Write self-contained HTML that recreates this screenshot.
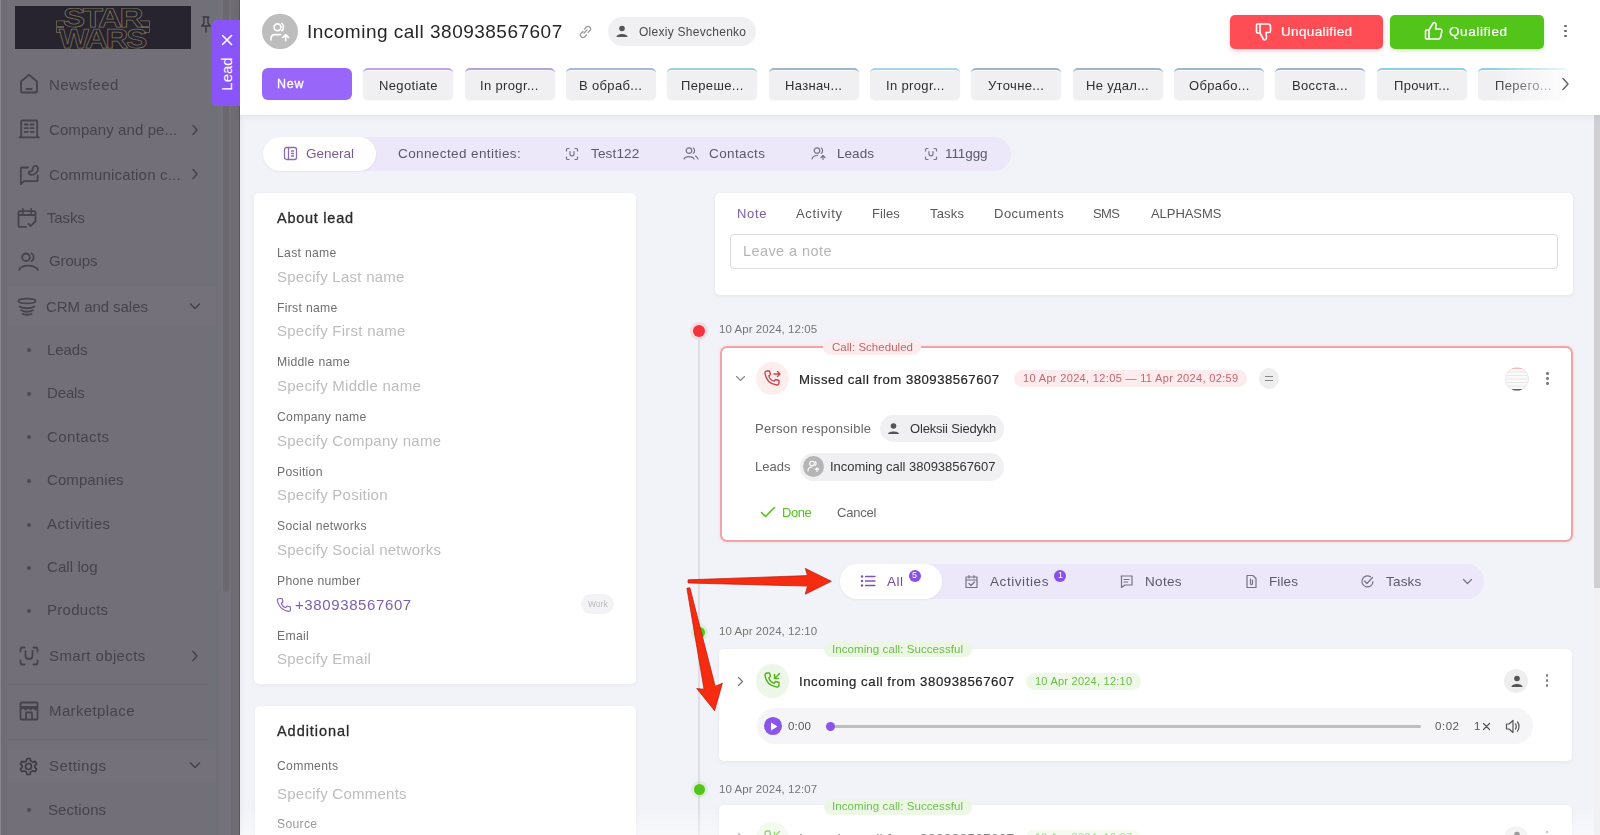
<!DOCTYPE html>
<html><head><meta charset="utf-8"><style>
html,body{margin:0;padding:0;}
body{width:1600px;height:835px;overflow:hidden;position:relative;background:#f3f3f9;font-family:'Liberation Sans', sans-serif;}
.t{position:absolute;white-space:nowrap;line-height:1;-webkit-font-smoothing:antialiased;}
.t{will-change:transform;}
</style></head><body>
<div style="position:absolute;left:0px;top:0px;width:240px;height:835px;background:#736f79;"></div>
<div style="position:absolute;left:0px;top:0px;width:7px;height:835px;background:#716d77;"></div>
<div style="position:absolute;left:0px;top:0px;width:1.2px;height:835px;background:#8a8690;"></div>
<div style="position:absolute;left:208px;top:0px;width:11px;height:835px;background:#707079;"></div>
<div style="position:absolute;left:219px;top:0px;width:12px;height:835px;background:#75717a;"></div>
<div style="position:absolute;left:223px;top:0px;width:6px;height:592px;background:#6b6870;border-radius:0 0 3px 3px;"></div>
<div style="position:absolute;left:231px;top:0px;width:7.5px;height:835px;background:#6e6b73;"></div>
<div style="position:absolute;left:238.5px;top:0px;width:1.5px;height:835px;background:#5a5760;"></div>
<div style="position:absolute;left:15px;top:6px;width:176px;height:43px;background:#27232f;"></div>
<svg style="position:absolute;left:56px;top:8px" width="95" height="41" viewBox="0 0 95 41"><g fill="none" stroke="#7a7258" stroke-width="0.75" stroke-linejoin="miter"><text x="7" y="18.6" textLength="78" lengthAdjust="spacingAndGlyphs" font-family="Liberation Sans" font-weight="700" font-size="27" letter-spacing="-2">STAR</text><text x="3" y="40" textLength="86" lengthAdjust="spacingAndGlyphs" font-family="Liberation Sans" font-weight="700" font-size="28.5" letter-spacing="-2">WARS</text><path d="M0.5 12.8 H9 M0.5 18.6 H8 M0.5 12.8 V18.6 M84 12.8 H93.5 V18.6 H85 M0.5 19.5 H8 M0.5 19.5 V24.5 H5 M86 19.5 H93.5 V24.5 H88"/></g></svg>
<svg style="position:absolute;left:200px;top:16px;" width="12" height="17" viewBox="0 0 12 17" fill="none"><path d="M3 1h6M4 1v6l-2 3h8l-2-3V1M6 10v6" stroke="#3b3842" stroke-width="1.4" stroke-linecap="round"/></svg>
<svg style="position:absolute;left:19px;top:73px;" width="20" height="21" viewBox="0 0 20 21" fill="none"><path d="M2 8.5 L10 1.8 L18 8.5 V18.2 C18 19,17.5 19.5,16.7 19.5 H3.3 C2.5 19.5,2 19,2 18.2 Z M7.5 16 H12.5" stroke="#46434d" stroke-width="1.8" stroke-linecap="round" stroke-linejoin="round" fill="none"/></svg>
<div class="t" style="left:49.4px;top:76.5px;font-size:15px;font-weight:400;color:#46434d;letter-spacing:0.36px;">Newsfeed</div>
<svg style="position:absolute;left:18px;top:119px;" width="22" height="20" viewBox="0 0 22 20" fill="none"><path d="M3.2 18.3 V2.5 C3.2 1.9,3.6 1.5,4.2 1.5 H18.2 C18.8 1.5,19.2 1.9,19.2 2.5 V18.3 M1.2 18.3 H21 M6.8 5.5 H9.8 M12.6 5.5 H15.6 M6.8 9.2 H9.8 M12.6 9.2 H15.6 M6.8 12.9 H9.8 M12.6 12.9 H15.6" stroke="#46434d" stroke-width="1.8" stroke-linecap="round" stroke-linejoin="round" fill="none"/></svg>
<div class="t" style="left:49.4px;top:121.8px;font-size:15px;font-weight:400;color:#46434d;letter-spacing:0.09px;">Company and pe...</div>
<svg style="position:absolute;left:191px;top:124px;" width="8" height="12" viewBox="0 0 8 12" fill="none"><path d="M2 1.5 L6 6 L2 10.5" stroke="#46434d" stroke-width="1.6" stroke-linecap="round" stroke-linejoin="round" fill="none"/></svg>
<svg style="position:absolute;left:19px;top:163px;" width="21" height="23" viewBox="0 0 21 23" fill="none"><path d="M9 4.5 H2.5 C2 4.5,1.8 4.8,1.8 5.2 V21.2 L5 18.2 H17.8 C18.3 18.2,18.6 17.9,18.6 17.4 V12.5 M10.2 11 C9.2 9.6,10.2 8,11.8 8.6 L13.8 7 C13 5.4,14.2 3.5,15.8 3 C18 2.4,19.6 4.5,18.8 7.2 C17.6 10.8,13.2 13.2,10.2 11 Z" stroke="#46434d" stroke-width="1.8" stroke-linecap="round" stroke-linejoin="round" fill="none"/></svg>
<div class="t" style="left:49.4px;top:166.7px;font-size:15px;font-weight:400;color:#46434d;letter-spacing:0.19px;">Communication c...</div>
<svg style="position:absolute;left:191px;top:168px;" width="8" height="12" viewBox="0 0 8 12" fill="none"><path d="M2 1.5 L6 6 L2 10.5" stroke="#46434d" stroke-width="1.6" stroke-linecap="round" stroke-linejoin="round" fill="none"/></svg>
<svg style="position:absolute;left:17px;top:208px;" width="20" height="21" viewBox="0 0 20 21" fill="none"><path d="M18.5 13 V4.5 C18.5 3.7,18 3.2,17.2 3.2 H2.8 C2 3.2,1.5 3.7,1.5 4.5 V17.5 C1.5 18.3,2 18.8,2.8 18.8 H9 M1.5 7 H18.5 M5.8 1 V5 M14.2 1 V5 M11.5 16 L13.5 18 L18.5 13.5" stroke="#46434d" stroke-width="1.8" stroke-linecap="round" stroke-linejoin="round" fill="none"/></svg>
<div class="t" style="left:46.6px;top:210.2px;font-size:15px;font-weight:400;color:#46434d;letter-spacing:-0.14px;">Tasks</div>
<svg style="position:absolute;left:18px;top:252px;" width="22" height="19" viewBox="0 0 22 19" fill="none"><path d="M8 1.5 A3.8 3.8 0 1 1 8 9.1 A3.8 3.8 0 1 1 8 1.5 Z M1.2 17.8 C3.5 12.2,16.5 12.2,19.8 17.8 M13.5 1.5 C16.3 2.5,16.3 8,13.5 9" stroke="#46434d" stroke-width="1.8" stroke-linecap="round" stroke-linejoin="round" fill="none"/></svg>
<div class="t" style="left:49.4px;top:252.9px;font-size:15px;font-weight:400;color:#46434d;letter-spacing:-0.14px;">Groups</div>
<div style="position:absolute;left:8px;top:287px;width:208px;height:38px;background:#75717b;"></div>
<svg style="position:absolute;left:17px;top:297px;" width="20" height="19" viewBox="0 0 20 19" fill="none"><path d="M1.5 4 C1.5 0.8,18.5 0.8,18.5 4 C18.5 7.2,1.5 7.2,1.5 4 Z M2.5 9.5 C6.5 11.8,13.5 11.8,17.5 9.5 M4 13.3 C7.5 15,12.5 15,16 13.3 M5.5 17 C8.5 18,11.5 18,14.5 17" stroke="#46434d" stroke-width="1.8" stroke-linecap="round" stroke-linejoin="round" fill="none"/></svg>
<div class="t" style="left:45.8px;top:298.6px;font-size:15px;font-weight:400;color:#46434d;letter-spacing:-0.05px;">CRM and sales</div>
<svg style="position:absolute;left:189px;top:302px;" width="12" height="8" viewBox="0 0 12 8" fill="none"><path d="M1.5 2 L6 6.5 L10.5 2" stroke="#46434d" stroke-width="1.6" stroke-linecap="round" stroke-linejoin="round" fill="none"/></svg>
<div style="position:absolute;left:27px;top:348.4px;width:4px;height:4.0px;background:#4d4a54;border-radius:50%;"></div>
<div class="t" style="left:47.4px;top:341.6px;font-size:15px;font-weight:400;color:#46434d;letter-spacing:-0.07px;">Leads</div>
<div style="position:absolute;left:27px;top:392.2px;width:4px;height:4.0px;background:#4d4a54;border-radius:50%;"></div>
<div class="t" style="left:47.4px;top:385.4px;font-size:15px;font-weight:400;color:#46434d;letter-spacing:-0.14px;">Deals</div>
<div style="position:absolute;left:27px;top:435.3px;width:4px;height:4.0px;background:#4d4a54;border-radius:50%;"></div>
<div class="t" style="left:47.4px;top:428.6px;font-size:15px;font-weight:400;color:#46434d;letter-spacing:0.41px;">Contacts</div>
<div style="position:absolute;left:27px;top:478.8px;width:4px;height:4.0px;background:#4d4a54;border-radius:50%;"></div>
<div class="t" style="left:47.4px;top:472.1px;font-size:15px;font-weight:400;color:#46434d;letter-spacing:0.09px;">Companies</div>
<div style="position:absolute;left:27px;top:522.5px;width:4px;height:4.0px;background:#4d4a54;border-radius:50%;"></div>
<div class="t" style="left:47.4px;top:515.8px;font-size:15px;font-weight:400;color:#46434d;letter-spacing:0.42px;">Activities</div>
<div style="position:absolute;left:27px;top:565.7px;width:4px;height:4.0px;background:#4d4a54;border-radius:50%;"></div>
<div class="t" style="left:47.4px;top:559.0px;font-size:15px;font-weight:400;color:#46434d;letter-spacing:0.08px;">Call log</div>
<div style="position:absolute;left:27px;top:608.8px;width:4px;height:4.0px;background:#4d4a54;border-radius:50%;"></div>
<div class="t" style="left:47.4px;top:602.0px;font-size:15px;font-weight:400;color:#46434d;letter-spacing:0.27px;">Products</div>
<svg style="position:absolute;left:19px;top:646px;" width="20" height="20" viewBox="0 0 20 20" fill="none"><path d="M5.5 1.5 H3.2 C2.2 1.5,1.5 2.2,1.5 3.2 V5.5 M14.5 1.5 H16.8 C17.8 1.5,18.5 2.2,18.5 3.2 V5.5 M1.5 14.5 V16.8 C1.5 17.8,2.2 18.5,3.2 18.5 H5.5 M18.5 14.5 V16.8 C18.5 17.8,17.8 18.5,16.8 18.5 H14.5 M6.5 5 V10 C6.5 14,13.5 14,13.5 10 V5" stroke="#46434d" stroke-width="1.8" stroke-linecap="round" stroke-linejoin="round" fill="none"/></svg>
<div class="t" style="left:49.0px;top:648.0px;font-size:15px;font-weight:400;color:#46434d;letter-spacing:0.38px;">Smart objects</div>
<svg style="position:absolute;left:191px;top:650px;" width="8" height="12" viewBox="0 0 8 12" fill="none"><path d="M2 1.5 L6 6 L2 10.5" stroke="#46434d" stroke-width="1.6" stroke-linecap="round" stroke-linejoin="round" fill="none"/></svg>
<div style="position:absolute;left:7px;top:684px;width:202px;height:1px;background:#6e6a74;"></div>
<svg style="position:absolute;left:19px;top:701px;" width="20" height="20" viewBox="0 0 20 20" fill="none"><path d="M2.5 1.5 H17.5 C18.1 1.5,18.5 1.9,18.5 2.5 V17.5 C18.5 18.1,18.1 18.5,17.5 18.5 H2.5 C1.9 18.5,1.5 18.1,1.5 17.5 V2.5 C1.5 1.9,1.9 1.5,2.5 1.5 Z M1.5 6 H18.5 M1.5 8.5 L4 6 L6.5 8.5 L9 6 L11.5 8.5 L14 6 L16.5 8.5 L18.5 6.5 M7 18.5 V11.5 H13 V18.5" stroke="#46434d" stroke-width="1.8" stroke-linecap="round" stroke-linejoin="round" fill="none"/></svg>
<div class="t" style="left:49.0px;top:703.1px;font-size:15px;font-weight:400;color:#46434d;letter-spacing:0.38px;">Marketplace</div>
<div style="position:absolute;left:7px;top:739px;width:202px;height:1px;background:#6e6a74;"></div>
<div style="position:absolute;left:8px;top:750px;width:208px;height:33px;background:#75717b;"></div>
<svg style="position:absolute;left:19px;top:757px;" width="19" height="19" viewBox="0 0 19 19" fill="none"><circle cx="9.5" cy="9.5" r="3" stroke="#3b3842" stroke-width="1.6"/><path d="M8 1.5 H11 L11.6 4 L13.8 5.2 L16.2 4.3 L17.7 6.9 L15.8 8.6 V10.4 L17.7 12.1 L16.2 14.7 L13.8 13.8 L11.6 15 L11 17.5 H8 L7.4 15 L5.2 13.8 L2.8 14.7 L1.3 12.1 L3.2 10.4 V8.6 L1.3 6.9 L2.8 4.3 L5.2 5.2 L7.4 4 Z" stroke="#3b3842" stroke-width="1.5" stroke-linejoin="round"/></svg>
<div class="t" style="left:49.0px;top:758.2px;font-size:15px;font-weight:400;color:#46434d;letter-spacing:0.40px;">Settings</div>
<svg style="position:absolute;left:189px;top:761px;" width="12" height="8" viewBox="0 0 12 8" fill="none"><path d="M1.5 2 L6 6.5 L10.5 2" stroke="#46434d" stroke-width="1.6" stroke-linecap="round" stroke-linejoin="round" fill="none"/></svg>
<div style="position:absolute;left:27px;top:808px;width:4px;height:4px;background:#4d4a54;border-radius:50%;"></div>
<div class="t" style="left:47.9px;top:801.8px;font-size:15px;font-weight:400;color:#46434d;letter-spacing:0.08px;">Sections</div>
<div style="position:absolute;left:240px;top:0px;width:1360px;height:835px;background:#f2f3f8;"></div>
<div style="position:absolute;left:240px;top:0px;width:5px;height:835px;background:linear-gradient(90deg,rgba(0,0,0,0.035),rgba(0,0,0,0));"></div>
<div style="position:absolute;left:1594px;top:115px;width:6px;height:720px;background:#f1f1f4;"></div>
<div style="position:absolute;left:1594px;top:115px;width:6px;height:473px;background:#d0d0d4;"></div>
<div style="position:absolute;left:240px;top:0px;width:1360px;height:115px;background:#fff;box-shadow:0 2px 6px rgba(0,0,0,0.06);"></div>
<div style="position:absolute;left:262.3px;top:13.9px;width:35.39999999999998px;height:35.4px;background:#bdbdbd;border-radius:50%;"></div>
<svg style="position:absolute;left:262px;top:14px;" width="36" height="36" viewBox="0 0 36 36" fill="none"><circle cx="15.5" cy="13.3" r="3.4" stroke="#fff" stroke-width="1.7"/><path d="M19.8 9.6 C22 10.8,22 15.6,19.8 16.8" stroke="#fff" stroke-width="1.7" stroke-linecap="round"/><path d="M9 25.8 V24.5 C9 22,10.5 20.6,13 20.6 H18.5" stroke="#fff" stroke-width="1.7" stroke-linecap="round"/><path d="M23.7 26.5 V21 M21 23.4 L23.7 20.6 L26.4 23.4" stroke="#fff" stroke-width="1.8" stroke-linecap="round" stroke-linejoin="round"/></svg>
<div class="t" style="left:306.5px;top:21.6px;font-size:19px;font-weight:400;color:#262626;letter-spacing:0.49px;">Incoming call 380938567607</div>
<svg style="position:absolute;left:578px;top:24px;" width="15" height="15" viewBox="0 0 15 15" fill="none"><path d="M6 9 L9 6 M5 7.5 L3.2 9.3 A2.4 2.4 0 0 0 6.7 12.8 L8.5 11 M10 8.5 L11.8 6.7 A2.4 2.4 0 0 0 8.3 3.2 L6.5 5" stroke="#9a9a9a" stroke-width="1.3" stroke-linecap="round"/></svg>
<div style="position:absolute;left:608px;top:17px;width:148px;height:29px;background:#f0f0f2;border-radius:15px;"></div>
<svg style="position:absolute;left:615px;top:24px;" width="14" height="14" viewBox="0 0 14 14" fill="none"><circle cx="7" cy="4.5" r="2.8" fill="#555"/><path d="M1.5 13 C1.5 9,12.5 9,12.5 13 Z" fill="#555"/></svg>
<div class="t" style="left:639.0px;top:25.6px;font-size:12px;font-weight:400;color:#4a4a4a;letter-spacing:0.27px;">Olexiy Shevchenko</div>
<div style="position:absolute;left:1229.5px;top:15px;width:153.5px;height:33.5px;background:#ff4d55;border-radius:5px;box-shadow:0 2px 4px rgba(255,77,85,0.25);"></div>
<svg style="position:absolute;left:1255px;top:22px;" width="19" height="20" viewBox="0 0 19 20" fill="none"><path d="M4 2 H13 C14.5 2,15.5 3,15.5 4.5 V9 C15.5 10,15 10.5,14 10.5 H11 L11.5 15 C11.7 17,10 18.5,8.5 17.5 L5 11 V2 Z M5 2 H2.5 C2 2,1.5 2.5,1.5 3 V10 C1.5 10.5,2 11,2.5 11 H5" stroke="#fff" stroke-width="1.6" stroke-linejoin="round" fill="none"/></svg>
<div class="t" style="left:1281.0px;top:24.7px;font-size:13.5px;font-weight:400;color:#fff;letter-spacing:0.35px;-webkit-text-stroke:0.2px #fff;">Unqualified</div>
<div style="position:absolute;left:1390.3px;top:15px;width:153.70000000000005px;height:33.5px;background:#52c41a;border-radius:5px;box-shadow:0 2px 4px rgba(82,196,26,0.25);"></div>
<svg style="position:absolute;left:1424px;top:21px;" width="19" height="20" viewBox="0 0 19 20" fill="none"><path d="M5 18 H14 C15.5 18,16.5 17,16.8 15.5 L17.8 10 C18 8.8,17 8,16 8 H11.5 L12 4 C12.2 2.2,10.5 1,9.2 2 L5 9 V18 Z M5 18 H2.5 C2 18,1.5 17.5,1.5 17 V10 C1.5 9.5,2 9,2.5 9 H5" stroke="#fff" stroke-width="1.6" stroke-linejoin="round" fill="none"/></svg>
<div class="t" style="left:1449.0px;top:24.7px;font-size:13.5px;font-weight:400;color:#fff;letter-spacing:0.59px;-webkit-text-stroke:0.2px #fff;">Qualified</div>
<div style="position:absolute;left:1564.4px;top:24.8px;width:2.599999999999909px;height:2.599999999999998px;background:#666;border-radius:50%;"></div>
<div style="position:absolute;left:1564.4px;top:29.8px;width:2.599999999999909px;height:2.599999999999998px;background:#666;border-radius:50%;"></div>
<div style="position:absolute;left:1564.4px;top:34.8px;width:2.599999999999909px;height:2.6000000000000014px;background:#666;border-radius:50%;"></div>
<div style="position:absolute;left:262px;top:68px;width:90px;height:32px;background:#9966fa;border-radius:6px;"></div>
<div class="t" style="left:276.8px;top:78.0px;font-size:12.5px;font-weight:400;color:#fff;letter-spacing:0.79px;-webkit-text-stroke:0.3px #fff;">New</div>
<div style="position:absolute;left:363.2px;top:68px;width:90.0px;height:32px;background:#f0f0f3;border-radius:5px;border-top:2px solid #c0a3e4;box-sizing:border-box;box-shadow:0 1px 2px rgba(0,0,0,0.04), inset 0 1px 0 rgba(255,255,255,0.6);"></div>
<div class="t" style="left:378.8px;top:79.0px;font-size:13px;font-weight:400;color:#2f2f2f;letter-spacing:0.00px;letter-spacing:0.35px;">Negotiate</div>
<div style="position:absolute;left:464.54999999999995px;top:68px;width:90.0px;height:32px;background:#f0f0f3;border-radius:5px;border-top:2px solid #b6a3dc;box-sizing:border-box;box-shadow:0 1px 2px rgba(0,0,0,0.04), inset 0 1px 0 rgba(255,255,255,0.6);"></div>
<div class="t" style="left:480.2px;top:79.0px;font-size:13px;font-weight:400;color:#2f2f2f;letter-spacing:0.00px;letter-spacing:0.35px;">In progr...</div>
<div style="position:absolute;left:565.9px;top:68px;width:90.0px;height:32px;background:#f0f0f3;border-radius:5px;border-top:2px solid #a7b9d6;box-sizing:border-box;box-shadow:0 1px 2px rgba(0,0,0,0.04), inset 0 1px 0 rgba(255,255,255,0.6);"></div>
<div class="t" style="left:579.3px;top:79.0px;font-size:13px;font-weight:400;color:#2f2f2f;letter-spacing:0.00px;letter-spacing:0.35px;">В обраб...</div>
<div style="position:absolute;left:667.25px;top:68px;width:90.0px;height:32px;background:#f0f0f3;border-radius:5px;border-top:2px solid #a6cdd8;box-sizing:border-box;box-shadow:0 1px 2px rgba(0,0,0,0.04), inset 0 1px 0 rgba(255,255,255,0.6);"></div>
<div class="t" style="left:680.9px;top:79.0px;font-size:13px;font-weight:400;color:#2f2f2f;letter-spacing:0.00px;letter-spacing:0.35px;">Переше...</div>
<div style="position:absolute;left:768.5999999999999px;top:68px;width:90.0px;height:32px;background:#f0f0f3;border-radius:5px;border-top:2px solid #a0b6ca;box-sizing:border-box;box-shadow:0 1px 2px rgba(0,0,0,0.04), inset 0 1px 0 rgba(255,255,255,0.6);"></div>
<div class="t" style="left:784.9px;top:79.0px;font-size:13px;font-weight:400;color:#2f2f2f;letter-spacing:0.00px;letter-spacing:0.35px;">Назнач...</div>
<div style="position:absolute;left:869.95px;top:68px;width:90.0px;height:32px;background:#f0f0f3;border-radius:5px;border-top:2px solid #a7d4e6;box-sizing:border-box;box-shadow:0 1px 2px rgba(0,0,0,0.04), inset 0 1px 0 rgba(255,255,255,0.6);"></div>
<div class="t" style="left:885.6px;top:79.0px;font-size:13px;font-weight:400;color:#2f2f2f;letter-spacing:0.00px;letter-spacing:0.35px;">In progr...</div>
<div style="position:absolute;left:971.3px;top:68px;width:90.0px;height:32px;background:#f0f0f3;border-radius:5px;border-top:2px solid #a0b5c8;box-sizing:border-box;box-shadow:0 1px 2px rgba(0,0,0,0.04), inset 0 1px 0 rgba(255,255,255,0.6);"></div>
<div class="t" style="left:988.2px;top:79.0px;font-size:13px;font-weight:400;color:#2f2f2f;letter-spacing:0.00px;letter-spacing:0.35px;">Уточне...</div>
<div style="position:absolute;left:1072.6499999999999px;top:68px;width:90.0px;height:32px;background:#f0f0f3;border-radius:5px;border-top:2px solid #a0b5c8;box-sizing:border-box;box-shadow:0 1px 2px rgba(0,0,0,0.04), inset 0 1px 0 rgba(255,255,255,0.6);"></div>
<div class="t" style="left:1086.1px;top:79.0px;font-size:13px;font-weight:400;color:#2f2f2f;letter-spacing:0.00px;letter-spacing:0.35px;">Не удал...</div>
<div style="position:absolute;left:1174.0px;top:68px;width:90.0px;height:32px;background:#f0f0f3;border-radius:5px;border-top:2px solid #a0b6ca;box-sizing:border-box;box-shadow:0 1px 2px rgba(0,0,0,0.04), inset 0 1px 0 rgba(255,255,255,0.6);"></div>
<div class="t" style="left:1188.7px;top:79.0px;font-size:13px;font-weight:400;color:#2f2f2f;letter-spacing:0.00px;letter-spacing:0.35px;">Обрабо...</div>
<div style="position:absolute;left:1275.35px;top:68px;width:90.0px;height:32px;background:#f0f0f3;border-radius:5px;border-top:2px solid #9fb4c9;box-sizing:border-box;box-shadow:0 1px 2px rgba(0,0,0,0.04), inset 0 1px 0 rgba(255,255,255,0.6);"></div>
<div class="t" style="left:1292.4px;top:79.0px;font-size:13px;font-weight:400;color:#2f2f2f;letter-spacing:0.00px;letter-spacing:0.35px;">Восста...</div>
<div style="position:absolute;left:1376.7px;top:68px;width:90.0px;height:32px;background:#f0f0f3;border-radius:5px;border-top:2px solid #90d0e2;box-sizing:border-box;box-shadow:0 1px 2px rgba(0,0,0,0.04), inset 0 1px 0 rgba(255,255,255,0.6);"></div>
<div class="t" style="left:1393.7px;top:79.0px;font-size:13px;font-weight:400;color:#2f2f2f;letter-spacing:0.00px;letter-spacing:0.35px;">Прочит...</div>
<div style="position:absolute;left:1478.05px;top:68px;width:90.0px;height:32px;background:#f0f0f3;border-radius:5px;border-top:2px solid #8fd0e2;box-sizing:border-box;box-shadow:0 1px 2px rgba(0,0,0,0.04), inset 0 1px 0 rgba(255,255,255,0.6);"></div>
<div class="t" style="left:1494.7px;top:79.0px;font-size:13px;font-weight:400;color:#2f2f2f;letter-spacing:0.00px;letter-spacing:0.35px;">Перего...</div>
<div style="position:absolute;left:1490px;top:60px;width:110px;height:50px;background:linear-gradient(90deg,rgba(255,255,255,0),#fff 85%);"></div>
<svg style="position:absolute;left:1561px;top:77px;" width="9" height="14" viewBox="0 0 9 14" fill="none"><path d="M2 1.5 L7 7 L2 12.5" stroke="#666" stroke-width="1.5" stroke-linecap="round" stroke-linejoin="round" fill="none"/></svg>
<div style="position:absolute;left:262.5px;top:136.5px;width:748.2px;height:34.0px;background:#ece7f9;border-radius:17px;"></div>
<div style="position:absolute;left:262.5px;top:136.5px;width:113.5px;height:34.0px;background:#fff;border-radius:17px;box-shadow:0 1px 3px rgba(0,0,0,0.05);"></div>
<svg style="position:absolute;left:283px;top:146px;" width="15" height="15" viewBox="0 0 15 15" fill="none"><rect x="1.5" y="1.5" width="12" height="12" rx="2" stroke="#8a6cb5" stroke-width="1.3"/><path d="M5.5 1.5 V13.5 M8 5 H11 M8 7.5 H11 M8 10 H11" stroke="#8a6cb5" stroke-width="1.3"/></svg>
<div class="t" style="left:305.7px;top:147.0px;font-size:13.5px;font-weight:400;color:#76599f;letter-spacing:-0.01px;">General</div>
<div class="t" style="left:398.0px;top:147.0px;font-size:13.5px;font-weight:400;color:#5c5966;letter-spacing:0.40px;">Connected entities:</div>
<svg style="position:absolute;left:565px;top:146.5px;" width="14" height="14" viewBox="0 0 14 14" fill="none"><path d="M4 1.5 H2.5 C2 1.5,1.5 2,1.5 2.5 V4 M10 1.5 H11.5 C12 1.5,12.5 2,12.5 2.5 V4 M1.5 10 V11.5 C1.5 12,2 12.5,2.5 12.5 H4 M12.5 10 V11.5 C12.5 12,12 12.5,11.5 12.5 H10 M5 4.5 V7 C5 9.5,9 9.5,9 7 V4.5" stroke="#77737f" stroke-width="1.2" stroke-linecap="round" stroke-linejoin="round" fill="none"/></svg>
<div class="t" style="left:590.7px;top:147.0px;font-size:13.5px;font-weight:400;color:#5c5966;letter-spacing:0.17px;">Test122</div>
<svg style="position:absolute;left:683px;top:146px;" width="16" height="14" viewBox="0 0 16 14" fill="none"><path d="M6 1.8 A2.8 2.8 0 1 1 6 7.4 A2.8 2.8 0 1 1 6 1.8 Z M1 13 C2.2 9.8,9.8 9.8,11 13 M10.3 2 C12 2.7,12 6.5,10.3 7.2 M12.5 10 C13.6 10.6,14.4 11.6,15 13" stroke="#77737f" stroke-width="1.2" stroke-linecap="round" stroke-linejoin="round" fill="none"/></svg>
<div class="t" style="left:708.9px;top:147.0px;font-size:13.5px;font-weight:400;color:#5c5966;letter-spacing:0.39px;">Contacts</div>
<svg style="position:absolute;left:811px;top:146px;" width="16" height="14" viewBox="0 0 16 14" fill="none"><path d="M6 1.8 A2.8 2.8 0 1 1 6 7.4 A2.8 2.8 0 1 1 6 1.8 Z M1 13 C1.5 10.5,4 9.5,6.5 9.5 M10.3 2 C12 2.7,12 6.5,10.3 7.2 M12 13.5 V9.5 M10 11.5 L12 9.5 L14 11.5" stroke="#77737f" stroke-width="1.2" stroke-linecap="round" stroke-linejoin="round" fill="none"/></svg>
<div class="t" style="left:837.0px;top:147.0px;font-size:13.5px;font-weight:400;color:#5c5966;letter-spacing:0.05px;">Leads</div>
<svg style="position:absolute;left:924px;top:146.5px;" width="14" height="14" viewBox="0 0 14 14" fill="none"><path d="M4 1.5 H2.5 C2 1.5,1.5 2,1.5 2.5 V4 M10 1.5 H11.5 C12 1.5,12.5 2,12.5 2.5 V4 M1.5 10 V11.5 C1.5 12,2 12.5,2.5 12.5 H4 M12.5 10 V11.5 C12.5 12,12 12.5,11.5 12.5 H10 M5 4.5 V7 C5 9.5,9 9.5,9 7 V4.5" stroke="#77737f" stroke-width="1.2" stroke-linecap="round" stroke-linejoin="round" fill="none"/></svg>
<div class="t" style="left:945.0px;top:147.0px;font-size:13.5px;font-weight:400;color:#5c5966;letter-spacing:-0.09px;">111ggg</div>
<div style="position:absolute;left:254.4px;top:193px;width:381.6px;height:491px;background:#fff;border-radius:5px;box-shadow:0 1px 4px rgba(40,30,80,0.05);"></div>
<div class="t" style="left:276.8px;top:210.9px;font-size:14.5px;font-weight:400;color:#2a2a2a;letter-spacing:0.74px;-webkit-text-stroke:0.3px currentColor;">About lead</div>
<div class="t" style="left:276.8px;top:247.0px;font-size:12.2px;font-weight:400;color:#707070;letter-spacing:0.00px;letter-spacing:0.3px;">Last name</div>
<div class="t" style="left:276.8px;top:268.6px;font-size:15px;font-weight:400;color:#bdbdbd;letter-spacing:0.00px;letter-spacing:0.25px;">Specify Last name</div>
<div class="t" style="left:276.8px;top:301.7px;font-size:12.2px;font-weight:400;color:#707070;letter-spacing:0.00px;letter-spacing:0.3px;">First name</div>
<div class="t" style="left:276.8px;top:323.3px;font-size:15px;font-weight:400;color:#bdbdbd;letter-spacing:0.00px;letter-spacing:0.25px;">Specify First name</div>
<div class="t" style="left:276.8px;top:356.3px;font-size:12.2px;font-weight:400;color:#707070;letter-spacing:0.00px;letter-spacing:0.3px;">Middle name</div>
<div class="t" style="left:276.8px;top:377.9px;font-size:15px;font-weight:400;color:#bdbdbd;letter-spacing:0.00px;letter-spacing:0.25px;">Specify Middle name</div>
<div class="t" style="left:276.8px;top:411.0px;font-size:12.2px;font-weight:400;color:#707070;letter-spacing:0.00px;letter-spacing:0.3px;">Company name</div>
<div class="t" style="left:276.8px;top:432.6px;font-size:15px;font-weight:400;color:#bdbdbd;letter-spacing:0.00px;letter-spacing:0.25px;">Specify Company name</div>
<div class="t" style="left:276.8px;top:465.6px;font-size:12.2px;font-weight:400;color:#707070;letter-spacing:0.00px;letter-spacing:0.3px;">Position</div>
<div class="t" style="left:276.8px;top:487.2px;font-size:15px;font-weight:400;color:#bdbdbd;letter-spacing:0.00px;letter-spacing:0.25px;">Specify Position</div>
<div class="t" style="left:276.8px;top:520.3px;font-size:12.2px;font-weight:400;color:#707070;letter-spacing:0.00px;letter-spacing:0.3px;">Social networks</div>
<div class="t" style="left:276.8px;top:541.9px;font-size:15px;font-weight:400;color:#bdbdbd;letter-spacing:0.00px;letter-spacing:0.25px;">Specify Social networks</div>
<div class="t" style="left:276.8px;top:574.9px;font-size:12.2px;font-weight:400;color:#707070;letter-spacing:0.00px;letter-spacing:0.3px;">Phone number</div>
<div class="t" style="left:276.8px;top:629.6px;font-size:12.2px;font-weight:400;color:#707070;letter-spacing:0.00px;letter-spacing:0.3px;">Email</div>
<div class="t" style="left:276.8px;top:651.2px;font-size:15px;font-weight:400;color:#bdbdbd;letter-spacing:0.00px;letter-spacing:0.25px;">Specify Email</div>
<svg style="position:absolute;left:276px;top:596.5px;" width="15" height="15" viewBox="0 0 15 15" fill="none"><path d="M3.5 1.5 L6 1.5 L7 5 L5.3 6.3 C6 8.5,7.5 10,9.7 10.7 L11 9 L14.5 10 V12.5 C14.5 13.5,13.5 14.5,12.5 14.3 C6.5 13.5,2 9,1.3 3.2 C1.2 2.3,2.3 1.5,3.5 1.5 Z" stroke="#8568b8" stroke-width="1.2" stroke-linecap="round" stroke-linejoin="round" fill="none"/></svg>
<div class="t" style="left:295.0px;top:596.8px;font-size:15px;font-weight:400;color:#7b5fae;letter-spacing:0.61px;">+380938567607</div>
<div style="position:absolute;left:581.4px;top:594.2px;width:32.80000000000007px;height:19.59999999999991px;background:#f3f3f6;border-radius:10px;"></div>
<div class="t" style="left:588.0px;top:599.8px;font-size:8.5px;font-weight:400;color:#bbbbbb;letter-spacing:0.00px;">Work</div>
<div style="position:absolute;left:255px;top:705.8px;width:381.20000000000005px;height:194.20000000000005px;background:#fff;border-radius:5px;box-shadow:0 1px 4px rgba(40,30,80,0.05);"></div>
<div class="t" style="left:276.8px;top:723.7px;font-size:14.5px;font-weight:400;color:#2a2a2a;letter-spacing:0.95px;-webkit-text-stroke:0.3px currentColor;">Additional</div>
<div class="t" style="left:276.8px;top:760.1px;font-size:12.2px;font-weight:400;color:#707070;letter-spacing:0.00px;letter-spacing:0.3px;">Comments</div>
<div class="t" style="left:276.8px;top:785.8px;font-size:15px;font-weight:400;color:#bdbdbd;letter-spacing:0.00px;letter-spacing:0.25px;">Specify Comments</div>
<div class="t" style="left:276.8px;top:817.6px;font-size:12.2px;font-weight:400;color:#707070;letter-spacing:0.00px;letter-spacing:0.3px;">Source</div>
<div style="position:absolute;left:715.4px;top:193px;width:858.0000000000001px;height:101.69999999999999px;background:#fff;border-radius:5px;box-shadow:0 1px 4px rgba(40,30,80,0.06);"></div>
<div class="t" style="left:737.0px;top:206.9px;font-size:13px;font-weight:400;color:#7a5cae;letter-spacing:0.71px;">Note</div>
<div class="t" style="left:796.0px;top:206.9px;font-size:13px;font-weight:400;color:#595959;letter-spacing:0.69px;">Activity</div>
<div class="t" style="left:871.9px;top:206.9px;font-size:13px;font-weight:400;color:#595959;letter-spacing:0.09px;">Files</div>
<div class="t" style="left:930.0px;top:206.9px;font-size:13px;font-weight:400;color:#595959;letter-spacing:0.19px;">Tasks</div>
<div class="t" style="left:994.0px;top:206.9px;font-size:13px;font-weight:400;color:#595959;letter-spacing:0.49px;">Documents</div>
<div class="t" style="left:1093.0px;top:206.9px;font-size:13px;font-weight:400;color:#595959;letter-spacing:-0.59px;">SMS</div>
<div class="t" style="left:1150.6px;top:206.9px;font-size:13px;font-weight:400;color:#595959;letter-spacing:-0.06px;">ALPHASMS</div>
<div style="position:absolute;left:730.4px;top:233.7px;width:828.0000000000001px;height:35.80000000000001px;background:#fff;border:1px solid #dcdcdc;border-radius:4px;box-sizing:border-box;"></div>
<div class="t" style="left:743.0px;top:244.2px;font-size:14.5px;font-weight:400;color:#b5b5b5;letter-spacing:0.42px;">Leave a note</div>
<div style="position:absolute;left:698.4px;top:340px;width:2.0px;height:495px;background:#dedee3;"></div>
<div style="position:absolute;left:693.3px;top:324.6px;width:12.0px;height:12.0px;background:#f5333f;border-radius:50%;box-shadow:0 0 0 3px rgba(245,51,63,0.12);"></div>
<div class="t" style="left:719.4px;top:324.4px;font-size:11.5px;font-weight:400;color:#767676;letter-spacing:0.05px;">10 Apr 2024, 12:05</div>
<div style="position:absolute;left:720px;top:346.2px;width:853px;height:196.00000000000006px;background:#fff;border:2px solid #f2a3a6;border-radius:7px;box-sizing:border-box;box-shadow:0 0 4px rgba(245,80,90,0.12);"></div>
<div style="position:absolute;left:823px;top:339px;width:98px;height:16px;background:#fdeced;border-radius:8px;"></div>
<div class="t" style="left:832.0px;top:341.7px;font-size:11.5px;font-weight:400;color:#c2646c;letter-spacing:0.03px;">Call: Scheduled</div>
<svg style="position:absolute;left:735px;top:375px;" width="11" height="7" viewBox="0 0 11 7" fill="none"><path d="M1.5 1.5 L5.5 5.5 L9.5 1.5" stroke="#8a8a8a" stroke-width="1.1" stroke-linecap="round" stroke-linejoin="round" fill="none"/></svg>
<div style="position:absolute;left:755.5px;top:362px;width:33.0px;height:33px;background:#fdeeee;border-radius:50%;"></div>
<svg style="position:absolute;left:763px;top:369px;" width="19" height="19" viewBox="0 0 19 19" fill="none"><path d="M4 2 L6.5 2 L7.5 5.5 L5.8 6.8 C6.5 9.5,8.5 11.5,11.2 12.2 L12.5 10.5 L16 11.5 V14 C16 15.2,15 16.2,13.8 16 C7.2 15.2,2.8 10.8,2 4.2 C1.8 3,2.8 2,4 2 Z" stroke="#c8454f" stroke-width="1.35" stroke-linejoin="round"/><path d="M11 5 H17 M14.5 2.5 L17 5 L14.5 7.5" stroke="#c8454f" stroke-width="1.35" stroke-linecap="round" stroke-linejoin="round"/></svg>
<div class="t" style="left:799.0px;top:372.5px;font-size:13.2px;font-weight:400;color:#262626;letter-spacing:0.47px;-webkit-text-stroke:0.2px currentColor;">Missed call from 380938567607</div>
<div style="position:absolute;left:1014.25px;top:370px;width:232.45000000000005px;height:17.19999999999999px;background:#fdeced;border-radius:9px;"></div>
<div class="t" style="left:1023.0px;top:373.1px;font-size:11px;font-weight:400;color:#c9646c;letter-spacing:0.34px;">10 Apr 2024, 12:05 — 11 Apr 2024, 02:59</div>
<div style="position:absolute;left:1258.7px;top:368.2px;width:20.59999999999991px;height:20.600000000000023px;background:#eeeeef;border-radius:50%;"></div>
<div style="position:absolute;left:1265px;top:376.3px;width:8px;height:1.1999999999999886px;background:#888;"></div>
<div style="position:absolute;left:1265px;top:379.7px;width:8px;height:1.1999999999999886px;background:#888;"></div>
<svg style="position:absolute;left:1504.5px;top:366.6px;" width="24" height="24" viewBox="0 0 24 24" fill="none"><defs><clipPath id="cav"><circle cx="12" cy="12" r="11.5"/></clipPath></defs><circle cx="12" cy="12" r="11.5" fill="#fafafa" stroke="#e6e6e6" stroke-width="1"/><g clip-path="url(#cav)"><path d="M3 5 H21 M2 8.5 H22 M2 12 H22 M2 15.5 H22 M3 19 H21" stroke="#e3e3e3" stroke-width="0.8"/><path d="M7 23 H17" stroke="#333" stroke-width="1.5"/></g><path d="M7 1.5 H17" stroke="#f0b0b0" stroke-width="0.8"/></svg>
<div style="position:absolute;left:1546.2px;top:372.4px;width:2.3999999999998636px;height:2.400000000000034px;background:#808080;border-radius:50%;"></div>
<div style="position:absolute;left:1546.2px;top:377.4px;width:2.3999999999998636px;height:2.400000000000034px;background:#808080;border-radius:50%;"></div>
<div style="position:absolute;left:1546.2px;top:382.4px;width:2.3999999999998636px;height:2.400000000000034px;background:#808080;border-radius:50%;"></div>
<div class="t" style="left:755.4px;top:422.4px;font-size:13px;font-weight:400;color:#666;letter-spacing:0.28px;">Person responsible</div>
<div style="position:absolute;left:879.7px;top:414.6px;width:124.69999999999993px;height:27.599999999999966px;background:#f0f0f2;border-radius:14px;"></div>
<svg style="position:absolute;left:887px;top:422px;" width="13" height="13" viewBox="0 0 13 13" fill="none"><circle cx="6.5" cy="4" r="2.8" fill="#555"/><path d="M1 12 C1 8.5,12 8.5,12 12 Z" fill="#555"/></svg>
<div class="t" style="left:909.7px;top:422.4px;font-size:13px;font-weight:400;color:#333;letter-spacing:-0.18px;">Oleksii Siedykh</div>
<div class="t" style="left:755.4px;top:459.9px;font-size:13px;font-weight:400;color:#666;letter-spacing:0.04px;">Leads</div>
<div style="position:absolute;left:799.6px;top:452.5px;width:204.79999999999995px;height:28.100000000000023px;background:#f0f0f2;border-radius:14px;"></div>
<div style="position:absolute;left:803px;top:456px;width:21px;height:21px;background:#b5b5b5;border-radius:50%;"></div>
<svg style="position:absolute;left:806px;top:459px;" width="15" height="15" viewBox="0 0 15 15" fill="none"><circle cx="6" cy="4.5" r="2.3" stroke="#fff" stroke-width="1.1"/><path d="M2 12 C2 9,4 8,6 8" stroke="#fff" stroke-width="1.1" stroke-linecap="round"/><path d="M9 2.5 C10.5 3.3,10.5 5.7,9 6.5 M11 12.5 V9 M9.5 10.5 L11 9 L12.5 10.5" stroke="#fff" stroke-width="1.1" stroke-linecap="round"/></svg>
<div class="t" style="left:830.0px;top:459.9px;font-size:13px;font-weight:400;color:#333;letter-spacing:-0.03px;">Incoming call 380938567607</div>
<svg style="position:absolute;left:760px;top:506px;" width="16" height="12" viewBox="0 0 16 12" fill="none"><path d="M1.5 6.5 L5.5 10.5 L14.5 1.5" stroke="#52c41a" stroke-width="1.6" stroke-linecap="round" stroke-linejoin="round" fill="none"/></svg>
<div class="t" style="left:781.6px;top:505.9px;font-size:13px;font-weight:400;color:#52c41a;letter-spacing:-0.49px;">Done</div>
<div class="t" style="left:836.6px;top:505.9px;font-size:13px;font-weight:400;color:#666;letter-spacing:-0.21px;">Cancel</div>
<div style="position:absolute;left:839.7px;top:564.3px;width:644.0px;height:34.30000000000007px;background:#ece7f9;border-radius:17px;"></div>
<div style="position:absolute;left:839.7px;top:564.3px;width:102.29999999999995px;height:34.30000000000007px;background:#fff;border-radius:17px;box-shadow:0 1px 3px rgba(0,0,0,0.05);"></div>
<svg style="position:absolute;left:860px;top:574px;" width="16" height="14" viewBox="0 0 16 14" fill="none"><circle cx="2" cy="2.5" r="1.2" fill="#7b55b8"/><circle cx="2" cy="7" r="1.2" fill="#7b55b8"/><circle cx="2" cy="11.5" r="1.2" fill="#7b55b8"/><path d="M5.5 2.5 H15 M5.5 7 H15 M5.5 11.5 H15" stroke="#7b55b8" stroke-width="1.3" stroke-linecap="round"/></svg>
<div class="t" style="left:886.5px;top:574.5px;font-size:13.5px;font-weight:400;color:#6f4cad;letter-spacing:0.49px;">All</div>
<div style="position:absolute;left:908.5px;top:569.6px;width:12.0px;height:12.0px;background:#8a4fe6;border-radius:50%;"></div>
<div class="t" style="left:912.0px;top:571.2px;font-size:9px;font-weight:400;color:#fff;letter-spacing:0.00px;">5</div>
<svg style="position:absolute;left:964px;top:574px;" width="15" height="15" viewBox="0 0 15 15" fill="none"><path d="M2 3 H13 V13.5 H2 Z M2 6 H13 M5 1.5 V4 M10 1.5 V4 M5 9.5 L7 11.5 L10.5 8" stroke="#77737f" stroke-width="1.2" stroke-linecap="round" stroke-linejoin="round" fill="none"/></svg>
<div class="t" style="left:989.6px;top:574.5px;font-size:13.5px;font-weight:400;color:#5c5966;letter-spacing:0.57px;">Activities</div>
<div style="position:absolute;left:1054px;top:569.6px;width:12px;height:12.0px;background:#8a4fe6;border-radius:50%;"></div>
<div class="t" style="left:1057.5px;top:571.2px;font-size:9px;font-weight:400;color:#fff;letter-spacing:0.00px;">1</div>
<svg style="position:absolute;left:1119px;top:574px;" width="15" height="15" viewBox="0 0 15 15" fill="none"><path d="M2 2 H13 V11 H6 L2.5 13.5 V2 Z M5 5.5 H10 M5 8 H8.5" stroke="#77737f" stroke-width="1.2" stroke-linecap="round" stroke-linejoin="round" fill="none"/></svg>
<div class="t" style="left:1145.0px;top:574.5px;font-size:13.5px;font-weight:400;color:#5c5966;letter-spacing:0.33px;">Notes</div>
<svg style="position:absolute;left:1244px;top:574px;" width="14" height="15" viewBox="0 0 14 15" fill="none"><path d="M3 1.5 H9 L12 4.5 V13.5 H3 Z M6.5 5 V9.5 C6.5 11,8.5 11,8.5 9.5 V6" stroke="#77737f" stroke-width="1.2" stroke-linecap="round" stroke-linejoin="round" fill="none"/></svg>
<div class="t" style="left:1269.0px;top:574.5px;font-size:13.5px;font-weight:400;color:#5c5966;letter-spacing:0.12px;">Files</div>
<svg style="position:absolute;left:1360px;top:574px;" width="15" height="15" viewBox="0 0 15 15" fill="none"><path d="M13 7.5 A5.5 5.5 0 1 1 10.5 2.8 M4.5 7 L7 9.5 L12.5 3.5" stroke="#77737f" stroke-width="1.2" stroke-linecap="round" stroke-linejoin="round" fill="none"/></svg>
<div class="t" style="left:1385.7px;top:574.5px;font-size:13.5px;font-weight:400;color:#5c5966;letter-spacing:0.20px;">Tasks</div>
<svg style="position:absolute;left:1462px;top:577.5px;" width="11" height="7" viewBox="0 0 11 7" fill="none"><path d="M1.5 1.5 L5.5 5.5 L9.5 1.5" stroke="#777" stroke-width="1.2" stroke-linecap="round" stroke-linejoin="round" fill="none"/></svg>
<div style="position:absolute;left:693.9px;top:626.9px;width:11.0px;height:11.0px;background:#52c41a;border-radius:50%;box-shadow:0 0 0 3px rgba(82,196,26,0.12);"></div>
<div class="t" style="left:719.4px;top:626.4px;font-size:11.5px;font-weight:400;color:#767676;letter-spacing:0.05px;">10 Apr 2024, 12:10</div>
<div style="position:absolute;left:718.8px;top:648.7px;width:853.7px;height:112.59999999999991px;background:#fff;border-radius:5px;box-shadow:0 1px 4px rgba(40,30,80,0.06);"></div>
<div style="position:absolute;left:823.5px;top:641.5px;width:148.79999999999995px;height:15.5px;background:#ebf7e3;border-radius:8px;"></div>
<div class="t" style="left:831.9px;top:643.7px;font-size:11.5px;font-weight:400;color:#6cbd4c;letter-spacing:0.08px;">Incoming call: Successful</div>
<svg style="position:absolute;left:737px;top:675.5px;" width="7" height="11" viewBox="0 0 7 11" fill="none"><path d="M1.5 1.5 L5.5 5.5 L1.5 9.5" stroke="#777" stroke-width="1.2" stroke-linecap="round" stroke-linejoin="round" fill="none"/></svg>
<div style="position:absolute;left:755.5px;top:664px;width:33.60000000000002px;height:33.60000000000002px;background:#edf7e7;border-radius:50%;"></div>
<svg style="position:absolute;left:763px;top:671px;" width="19" height="19" viewBox="0 0 19 19" fill="none"><path d="M4 2 L6.5 2 L7.5 5.5 L5.8 6.8 C6.5 9.5,8.5 11.5,11.2 12.2 L12.5 10.5 L16 11.5 V14 C16 15.2,15 16.2,13.8 16 C7.2 15.2,2.8 10.8,2 4.2 C1.8 3,2.8 2,4 2 Z" stroke="#52b41a" stroke-width="1.4" stroke-linejoin="round"/><path d="M16.5 2.5 L11.5 7.5 M11.5 3.5 V7.5 H15.5" stroke="#52b41a" stroke-width="1.4" stroke-linecap="round" stroke-linejoin="round"/></svg>
<div class="t" style="left:799.0px;top:674.8px;font-size:13.2px;font-weight:400;color:#262626;letter-spacing:0.55px;-webkit-text-stroke:0.2px currentColor;">Incoming call from 380938567607</div>
<div style="position:absolute;left:1026px;top:672.5px;width:115px;height:17.0px;background:#edf8e6;border-radius:9px;"></div>
<div class="t" style="left:1035.0px;top:675.6px;font-size:11px;font-weight:400;color:#6cbd4c;letter-spacing:0.24px;">10 Apr 2024, 12:10</div>
<div style="position:absolute;left:1504.3px;top:668.6px;width:24.100000000000136px;height:24.100000000000023px;background:#eeeeef;border-radius:50%;"></div>
<svg style="position:absolute;left:1509.5px;top:673.5px;" width="14" height="14" viewBox="0 0 14 14" fill="none"><circle cx="7" cy="4.5" r="2.8" fill="#555"/><path d="M1.5 13 C1.5 9,12.5 9,12.5 13 Z" fill="#555"/></svg>
<div style="position:absolute;left:1546px;top:674.4px;width:2.400000000000091px;height:2.3999999999999773px;background:#808080;border-radius:50%;"></div>
<div style="position:absolute;left:1546px;top:679.4px;width:2.400000000000091px;height:2.3999999999999773px;background:#808080;border-radius:50%;"></div>
<div style="position:absolute;left:1546px;top:684.4px;width:2.400000000000091px;height:2.3999999999999773px;background:#808080;border-radius:50%;"></div>
<div style="position:absolute;left:757px;top:707.7px;width:775.8px;height:36.0px;background:#f5f5f8;border-radius:18px;"></div>
<div style="position:absolute;left:764.4px;top:717.2px;width:17.800000000000068px;height:17.799999999999955px;background:#8a55ea;border-radius:50%;"></div>
<svg style="position:absolute;left:770px;top:721.5px;" width="8" height="9" viewBox="0 0 8 9" fill="none"><path d="M1 0.5 L7.5 4.5 L1 8.5 Z" fill="#fff"/></svg>
<div class="t" style="left:787.8px;top:720.5px;font-size:11.5px;font-weight:400;color:#595959;letter-spacing:0.20px;">0:00</div>
<div style="position:absolute;left:830px;top:724.5px;width:591px;height:3.0px;background:#bdbdbd;border-radius:2px;"></div>
<div style="position:absolute;left:826.1px;top:721.5px;width:9.0px;height:9.0px;background:#8a55ea;border-radius:50%;"></div>
<div class="t" style="left:1434.9px;top:720.5px;font-size:11.5px;font-weight:400;color:#595959;letter-spacing:0.54px;">0:02</div>
<div class="t" style="left:1473.7px;top:720.5px;font-size:11.5px;font-weight:400;color:#595959;letter-spacing:0.00px;">1</div>
<svg style="position:absolute;left:1482px;top:721.5px;" width="9" height="9" viewBox="0 0 9 9" fill="none"><path d="M1.5 1.5 L7.5 7.5 M7.5 1.5 L1.5 7.5" stroke="#555" stroke-width="1.2" stroke-linecap="round" stroke-linejoin="round" fill="none"/></svg>
<svg style="position:absolute;left:1505px;top:719px;" width="16" height="15" viewBox="0 0 16 15" fill="none"><path d="M1.5 5 H4 L8 1.5 V13.5 L4 10 H1.5 Z" stroke="#555" stroke-width="1.2" stroke-linejoin="round"/><path d="M10.5 5 C11.5 6,11.5 9,10.5 10 M12.5 3 C14.5 5,14.5 10,12.5 12" stroke="#555" stroke-width="1.2" stroke-linecap="round"/></svg>
<div style="position:absolute;left:693.9px;top:784.1px;width:11.0px;height:11.0px;background:#52c41a;border-radius:50%;box-shadow:0 0 0 3px rgba(82,196,26,0.12);"></div>
<div class="t" style="left:719.4px;top:783.6px;font-size:11.5px;font-weight:400;color:#767676;letter-spacing:0.05px;">10 Apr 2024, 12:07</div>
<div style="position:absolute;left:718.8px;top:805px;width:853.7px;height:95px;background:#fff;border-radius:5px;box-shadow:0 1px 4px rgba(40,30,80,0.06);"></div>
<div style="position:absolute;left:823.5px;top:799.2px;width:148.79999999999995px;height:15.599999999999909px;background:#ebf7e3;border-radius:8px;"></div>
<div class="t" style="left:831.9px;top:801.4px;font-size:11.5px;font-weight:400;color:#6cbd4c;letter-spacing:0.08px;">Incoming call: Successful</div>
<div style="position:absolute;left:755.5px;top:821.5px;width:33.60000000000002px;height:33.60000000000002px;background:#edf7e7;border-radius:50%;"></div>
<svg style="position:absolute;left:763px;top:828.5px;" width="19" height="19" viewBox="0 0 19 19" fill="none"><path d="M4 2 L6.5 2 L7.5 5.5 L5.8 6.8 C6.5 9.5,8.5 11.5,11.2 12.2 L12.5 10.5 L16 11.5 V14 C16 15.2,15 16.2,13.8 16 C7.2 15.2,2.8 10.8,2 4.2 C1.8 3,2.8 2,4 2 Z" stroke="#52b41a" stroke-width="1.4" stroke-linejoin="round"/><path d="M16.5 2.5 L11.5 7.5 M11.5 3.5 V7.5 H15.5" stroke="#52b41a" stroke-width="1.4" stroke-linecap="round" stroke-linejoin="round"/></svg>
<div class="t" style="left:799.0px;top:832.3px;font-size:13.2px;font-weight:400;color:#262626;letter-spacing:0.55px;-webkit-text-stroke:0.2px currentColor;">Incoming call from 380938567607</div>
<div style="position:absolute;left:1026px;top:830px;width:115px;height:17px;background:#edf8e6;border-radius:9px;"></div>
<div style="position:absolute;left:1504.3px;top:826px;width:24.100000000000136px;height:24px;background:#eeeeef;border-radius:50%;"></div>
<svg style="position:absolute;left:1509.5px;top:830px;" width="14" height="14" viewBox="0 0 14 14" fill="none"><circle cx="7" cy="4.5" r="2.8" fill="#555"/><path d="M1.5 13 C1.5 9,12.5 9,12.5 13 Z" fill="#555"/></svg>
<div style="position:absolute;left:1546px;top:830.7px;width:2.400000000000091px;height:2.3999999999999773px;background:#808080;border-radius:50%;"></div>
<div style="position:absolute;left:1546px;top:835.7px;width:2.400000000000091px;height:2.3999999999999773px;background:#808080;border-radius:50%;"></div>
<div style="position:absolute;left:1546px;top:840.7px;width:2.400000000000091px;height:2.3999999999999773px;background:#808080;border-radius:50%;"></div>
<svg style="position:absolute;left:737px;top:832px;" width="7" height="11" viewBox="0 0 7 11" fill="none"><path d="M1.5 1.5 L5.5 5.5 L1.5 9.5" stroke="#777" stroke-width="1.2" stroke-linecap="round" stroke-linejoin="round" fill="none"/></svg>
<div class="t" style="left:1035.0px;top:831.9px;font-size:11px;font-weight:400;color:#6cbd4c;letter-spacing:0.24px;">10 Apr 2024, 12:07</div>
<div style="position:absolute;left:240px;top:805px;width:1354px;height:30px;background:linear-gradient(180deg,rgba(255,255,255,0),rgba(255,255,255,0.45));"></div>
<div style="position:absolute;left:211.5px;top:20px;width:28.5px;height:86px;background:#8a55f8;border-radius:5px 0 0 5px;"></div>
<svg style="position:absolute;left:220.5px;top:34px;" width="12" height="12" viewBox="0 0 12 12" fill="none"><path d="M1.5 1.5 L10.5 10.5 M10.5 1.5 L1.5 10.5" stroke="#fff" stroke-width="1.6" stroke-linecap="round" stroke-linejoin="round" fill="none"/></svg>
<div style="position:absolute;left:225.6px;top:73.7px;width:0;height:0;"><div style="position:absolute;left:0;top:0;transform:translate(-50%,-50%) rotate(-90deg);font-size:15px;line-height:1;color:#fff;white-space:nowrap;">Lead</div></div>
<svg style="position:absolute;left:0;top:0" width="1600" height="835" viewBox="0 0 1600 835" fill="none"><path d="M688.1 579.8 L807.5 575.6 L805.3 568.4 L831.4 581.3 L805.3 594.2 L807.5 586.1 L688.1 583 Z" fill="#f62c10" stroke="#b8170e" stroke-width="0.7" stroke-linejoin="round"/><path d="M686.9 588.3 L704 689.2 L696.7 688.6 L714.6 710.7 L722.4 683.2 L715.2 686.3 L689.9 587.7 Z" fill="#f62c10" stroke="#b8170e" stroke-width="0.7" stroke-linejoin="round"/></svg>
</body></html>
